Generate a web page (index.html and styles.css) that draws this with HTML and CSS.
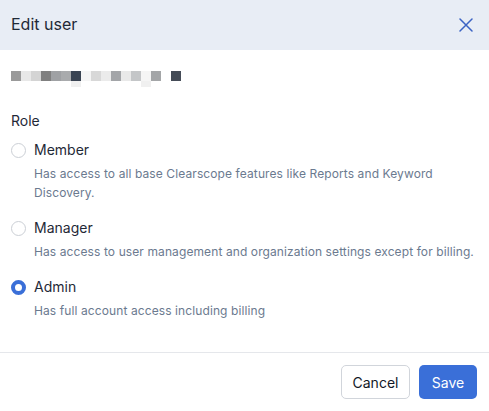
FILE: index.html
```html
<!DOCTYPE html>
<html lang="en">

<head>
  <meta charset="UTF-8">
  <meta name="viewport" content="width=device-width, initial-scale=1.0">
  <title>Edit user</title>
  <link rel="stylesheet" href="styles.css">
</head>

<body>
  <div class="modal">
    <div class="modal-header">
      <h2>Edit user</h2>
      <button class="close-btn" aria-label="Close">
        <svg width="14" height="14" viewBox="0 0 14 14">
          <path d="M1 1 L13 13 M13 1 L1 13" stroke="#3b63c4" stroke-width="1.5" stroke-linecap="round" fill="none" />
        </svg>
      </button>
    </div>

    <div class="modal-body">
      <!-- blurred email -->
      <div class="email-blur">
        <span style="background:#9a9a9a"></span>
        <span style="background:#e8e8e8"></span>
        <span style="background:#d4d4d4"></span>
        <span style="background:#808080"></span>
        <span style="background:#9fa1a4"></span>
        <span style="background:#a9abad"></span>
        <span class="tail" style="background:#3a4453"></span>
        <span style="background:#f5f5f5"></span>
        <span style="background:#d8d8d8"></span>
        <span style="background:#ebebeb"></span>
        <span style="background:#a3a5a8"></span>
        <span style="background:#e9e9e9"></span>
        <span style="background:#c4c6c8"></span>
        <span class="tail" style="background:#f5f5f5"></span>
        <span style="background:#a4a6a8"></span>
        <span style="background:#ffffff"></span>
        <span style="background:#454c57"></span>
      </div>

      <div class="role-label">Role</div>

      <div class="role-list">
        <label class="role-option">
          <input type="radio" name="role" value="member">
          <div class="role-text">
            <div class="role-name">Member</div>
            <div class="role-desc">Has access to all base Clearscope features like Reports and Keyword Discovery.</div>
          </div>
        </label>

        <label class="role-option">
          <input type="radio" name="role" value="manager">
          <div class="role-text">
            <div class="role-name">Manager</div>
            <div class="role-desc">Has access to user management and organization settings except for billing.</div>
          </div>
        </label>

        <label class="role-option">
          <input type="radio" name="role" value="admin" checked>
          <div class="role-text">
            <div class="role-name">Admin</div>
            <div class="role-desc">Has full account access including billing</div>
          </div>
        </label>
      </div>
    </div>

    <div class="modal-footer">
      <button class="btn btn-cancel">Cancel</button>
      <button class="btn btn-save">Save</button>
    </div>
  </div>
</body>

</html>
```

FILE: styles.css
```css
body {
  margin: 0;
  font-family: Inter, "Noto Sans", sans-serif;
  background: #ffffff;
  color: #1f2937;
}

.modal {
  width: 489px;
  height: 411px;
  display: flex;
  flex-direction: column;
}

.modal-header {
  height: 50px;
  background: #e8edf5;
  display: flex;
  align-items: center;
  justify-content: space-between;
  padding: 0 16px 0 11px;
}

.modal-header h2 {
  margin: 0 0 2px 0;
  font-size: 16px;
  font-weight: 400;
  color: #1f2937;
}

.close-btn {
  background: none;
  border: none;
  padding: 0;
  cursor: pointer;
  display: flex;
}

.modal-body {
  flex: 1;
  padding: 21px 11px 0 11px;
}

/* pixelated email placeholder */
.email-blur {
  display: flex;
  height: 10px;
}

.email-blur span {
  width: 10px;
  height: 10px;
}

.email-blur span.tail {
  box-shadow: 0 6px 0 #f0f0f0;
}

.role-label {
  margin-top: 31px;
  font-size: 14px;
  line-height: 18px;
}

.role-list {
  margin-top: 11px;
  display: flex;
  flex-direction: column;
  gap: 17px;
}

.role-option {
  display: flex;
  gap: 8px;
  cursor: pointer;
}

.role-option input {
  appearance: none;
  width: 15px;
  height: 15px;
  margin: 2px 0 0 0;
  border: 1px solid #cbcfd5;
  border-radius: 50%;
  background: #fff;
  flex-shrink: 0;
}

.role-option input:checked {
  border: 4px solid #3a6fd8;
}

.role-name {
  font-size: 14px;
  line-height: 18px;
  color: #1f2937;
}

.role-desc {
  margin-top: 5px;
  font-size: 12px;
  line-height: 19px;
  letter-spacing: 0.1px;
  color: #6b7a8f;
}

.modal-footer {
  border-top: 1px solid #e5e7eb;
  height: 58px;
  display: flex;
  align-items: center;
  justify-content: flex-end;
  gap: 9px;
  padding: 0 12px;
}

.btn {
  height: 34px;
  font-family: inherit;
  font-size: 14px;
  border-radius: 5px;
  cursor: pointer;
}

.btn-cancel {
  width: 69px;
  background: #fff;
  border: 1px solid #d1d5db;
  color: #111827;
}

.btn-save {
  width: 58px;
  background: #3a6fd8;
  border: none;
  color: #fff;
}
```
